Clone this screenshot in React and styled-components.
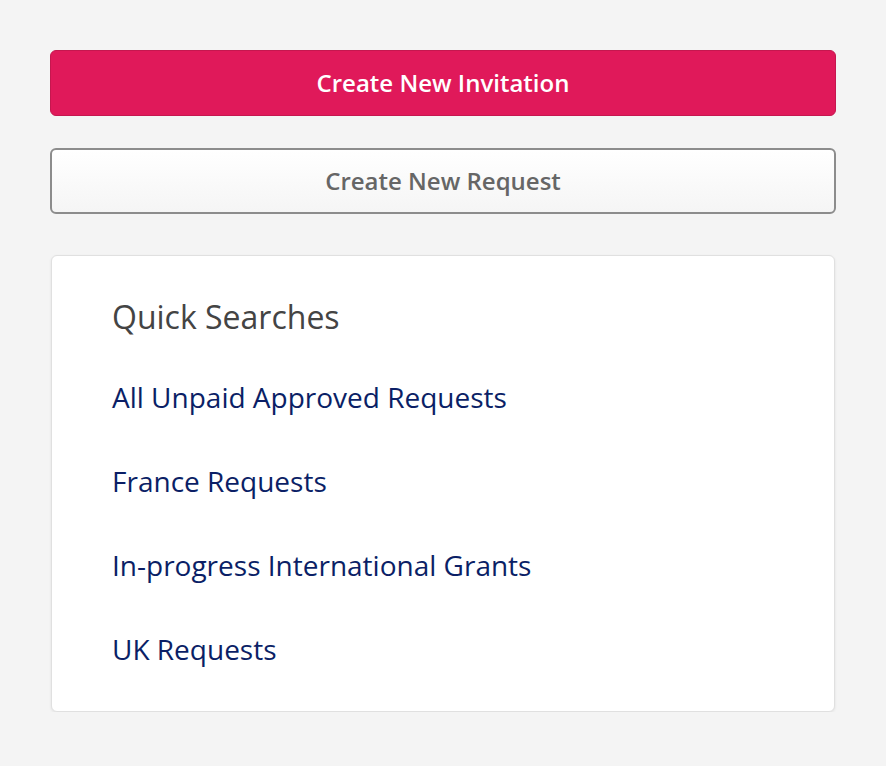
import React from 'react';
import styled, {createGlobalStyle} from 'styled-components';

const GlobalStyle = createGlobalStyle `
    html, body {
        margin: 0;
        padding: 0;
        background: #f4f4f4;
        font-family: "Open Sans", "Noto Sans", sans-serif;
    }
`

const Page = styled.div `
    padding: 50px 50px 0 50px;
    display: flex;
    flex-direction: column;
`

const Button = styled.button `
    display: block;
    width: 100%;
    height: 66px;
    padding-bottom: 2px;
    border-radius: 6px;
    font-family: inherit;
    font-weight: 600;
    font-size: 24px;
    cursor: pointer;
    margin-bottom: ${props => props.primary ? '32px' : '41px'};
    background: ${props => props.primary
        ? '#e0195a'
        : 'linear-gradient(#ffffff, #f5f5f5)'};
    color: ${props => props.primary ? '#ffffff' : '#666666'};
    border: ${props => props.primary ? '1px solid #c5174f' : '2px solid #8c8c8c'};
`

const Card = styled.div `
    margin: 0 1px;
    background: #fff;
    border: 1px solid #e0e0e0;
    border-radius: 6px;
    box-shadow: 0 1px 3px rgba(0, 0, 0, 0.08);
    padding: 39px 60px 44px 60px;
`

const Title = styled.h2 `
    margin: 0 0 40px 0;
    font-weight: 400;
    font-size: 32px;
    line-height: 44px;
    color: #444;
`

const LinkList = styled.ul `
    list-style: none;
    margin: 0;
    padding: 0;
    display: flex;
    flex-direction: column;
    gap: 48px;
`

const Link = styled.a `
    display: block;
    font-size: 28px;
    line-height: 36px;
    color: #0b1f66;
    text-decoration: none;
`

const searches = [
    'All Unpaid Approved Requests',
    'France Requests',
    'In-progress International Grants',
    'UK Requests'
]

const App = () => (
    <Page>
        <GlobalStyle/>
        <Button primary>Create New Invitation</Button>
        <Button>Create New Request</Button>
        <Card>
            <Title>Quick Searches</Title>
            <LinkList>
                {searches.map((s, i) => (
                    <li key={i}>
                        <Link href="#">{s}</Link>
                    </li>
                ))}
            </LinkList>
        </Card>
    </Page>
);

export default App
